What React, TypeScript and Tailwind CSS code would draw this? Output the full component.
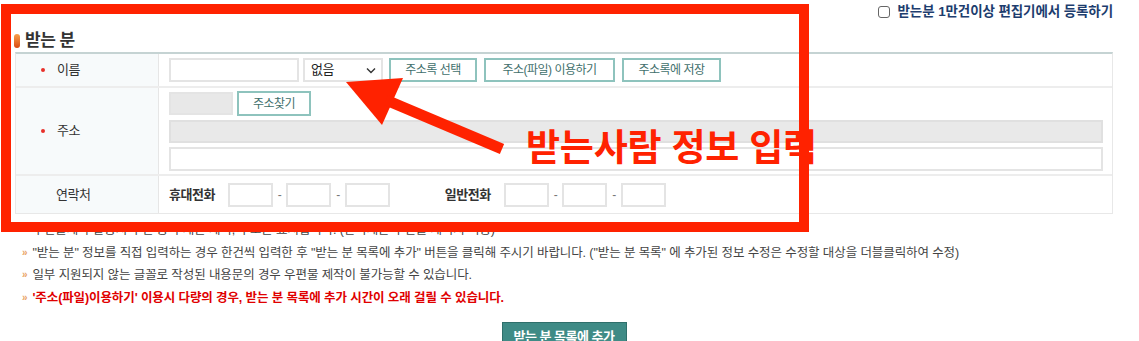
import React from 'react';

const inputCls = 'h-[24px] border-2 border-[#e4e4e4] bg-white';
const btnCls =
  'h-[24px] border-2 border-[#8ec3bd] bg-white px-[12px] text-[12px] leading-[20px] text-[#3f6f6c] whitespace-nowrap';

const Label = ({ text, required = true }: { text: string; required?: boolean }) => (
  <div className="flex items-center border-r border-[#e6e6e6] bg-[#f7fafb] pl-[25px] text-[13px] text-[#333]">
    {required ? <span className="mr-[12px] h-[4px] w-[4px] rounded-full bg-[#e8302a]" /> : <span className="w-[15px]" />}
    <span>{text}</span>
  </div>
);

const Phone = ({ label }: { label: string }) => (
  <div className="flex items-center">
    <span className="mr-[13px] text-[13px] font-bold text-[#333]">{label}</span>
    <div className={`${inputCls} w-[45px]`} />
    <span className="mx-[5px] text-[12px] text-[#777]">-</span>
    <div className={`${inputCls} w-[45px]`} />
    <span className="mx-[5px] text-[12px] text-[#777]">-</span>
    <div className={`${inputCls} w-[45px]`} />
  </div>
);

const notes = [
  '우편물제작 발송시 우편 중 부재는 제외, 주소는 표시됩니다. (단독제본 우편물 제외시 적용)',
  '"받는 분" 정보를 직접 입력하는 경우 한건씩 입력한 후 "받는 분 목록에 추가" 버튼을 클릭해 주시기 바랍니다. ("받는 분 목록" 에 추가된 정보 수정은 수정할 대상을 더블클릭하여 수정)',
  '일부 지원되지 않는 글꼴로 작성된 내용문의 경우 우편물 제작이 불가능할 수 있습니다.',
];

export default function App() {
  return (
    <div className="relative h-[341px] w-[1139px] overflow-hidden bg-white font-['Liberation_Sans','Noto_Sans_CJK_KR',sans-serif] tracking-[-0.5px]">
      <div className="pl-[15px] pr-[26px] pt-[4px]">
        {/* top checkbox */}
        <div className="flex h-[16px] items-center justify-end">
          <span className="mr-[8px] h-[12px] w-[12px] rounded-[3px] border border-[#666] bg-white" />
          <span className="text-[13.5px] font-bold tracking-[-0.1px] text-[#1d3d6e]">받는분 1만건이상 편집기에서 등록하기</span>
        </div>

        {/* title */}
        <div className="mt-[10px] flex h-[22px] items-center">
          <span className="-ml-[1px] mr-[5px] h-[14px] w-[6px] rounded-full bg-gradient-to-b from-[#f7a04a] to-[#d9480f]" />
          <span className="text-[17px] font-bold text-[#333]">받는 분</span>
        </div>

        {/* form table */}
        <div className="border-x border-b border-t-2 border-x-[#e8e8e8] border-b-[#e8e8e8] border-t-[#c5d3d3]">
          <div className="grid h-[34px] grid-cols-[143px_1fr] border-b-2 border-[#ededed]">
            <Label text="이름" />
            <div className="flex items-center gap-[4px] pl-[10px]">
              <div className={`${inputCls} w-[130px]`} />
              <div className={`${inputCls} flex w-[80px] items-center justify-between pl-[6px] pr-[5px] text-[13px] text-[#222]`}>
                <span>없음</span>
                <svg width="10" height="7" viewBox="0 0 10 7">
                  <path d="M1 1.5 L5 5.5 L9 1.5" fill="none" stroke="#333" strokeWidth="1.4" />
                </svg>
              </div>
              <button className={`${btnCls} ml-[2px] w-[88px]`}>주소록 선택</button>
              <button className={`${btnCls} ml-[3px] w-[131px]`}>주소(파일) 이용하기</button>
              <button className={`${btnCls} ml-[3px] w-[99px]`}>주소록에 저장</button>
            </div>
          </div>

          <div className="grid h-[88px] grid-cols-[143px_1fr] border-b-2 border-[#ededed]">
            <Label text="주소" />
            <div className="flex flex-col gap-[4px] pl-[10px] pr-[9px] pt-[3px]">
              <div className="flex items-center gap-[4px]">
                <div className="h-[23px] w-[64px] border-2 border-[#e4e4e4] bg-[#e8e8e8]" />
                <button className={`${btnCls} h-[25px] w-[74px]`}>주소찾기</button>
              </div>
              <div className="h-[23px] border-2 border-[#e0e0e0] bg-[#e9e9e9]" />
              <div className={`${inputCls}`} />
            </div>
          </div>

          <div className="grid h-[37px] grid-cols-[143px_1fr]">
            <Label text="연락처" required={false} />
            <div className="flex items-center gap-[55px] pl-[10px]">
              <Phone label="휴대전화" />
              <Phone label="일반전화" />
            </div>
          </div>
        </div>

        {/* notes */}
        <ul className="mt-[5px] pl-[7px] text-[12.5px] leading-[22.5px] tracking-[-0.1px] text-[#444]">
          {notes.map((n) => (
            <li key={n} className="flex items-center whitespace-nowrap">
              <span className="mr-[5px] text-[10px] font-bold text-[#e9a467]">»</span>
              {n}
            </li>
          ))}
          <li className="flex items-center whitespace-nowrap font-bold text-[#e00000]">
            <span className="mr-[5px] text-[10px] font-bold text-[#e9a467]">»</span>
            '주소(파일)이용하기' 이용시 다량의 경우, 받는 분 목록에 추가 시간이 오래 걸릴 수 있습니다.
          </li>
        </ul>

        <div className="mt-[13px] flex justify-center">
          <button className="h-[30px] w-[125px] border border-[#2f6f6b] bg-[#3f8b86] text-[13px] font-bold text-white">
            받는 분 목록에 추가
          </button>
        </div>
      </div>

      {/* annotation overlay */}
      <div className="pointer-events-none absolute left-[1px] top-[4px] h-[228px] w-[808px] border-[10px] border-[#ff2200]" />
      <svg className="pointer-events-none absolute left-0 top-0" width="1139" height="341">
        <polygon points="346,82 403,78 382,125" fill="#ff2200" />
        <line x1="386" y1="100" x2="502" y2="149" stroke="#ff2200" strokeWidth="11" />
      </svg>
      <div className="pointer-events-none absolute left-[526px] top-[124px] text-[37px] font-bold leading-[50px] tracking-[-0.2px] text-[#ff2200]">
        받는사람 정보 입력
      </div>
    </div>
  );
}
